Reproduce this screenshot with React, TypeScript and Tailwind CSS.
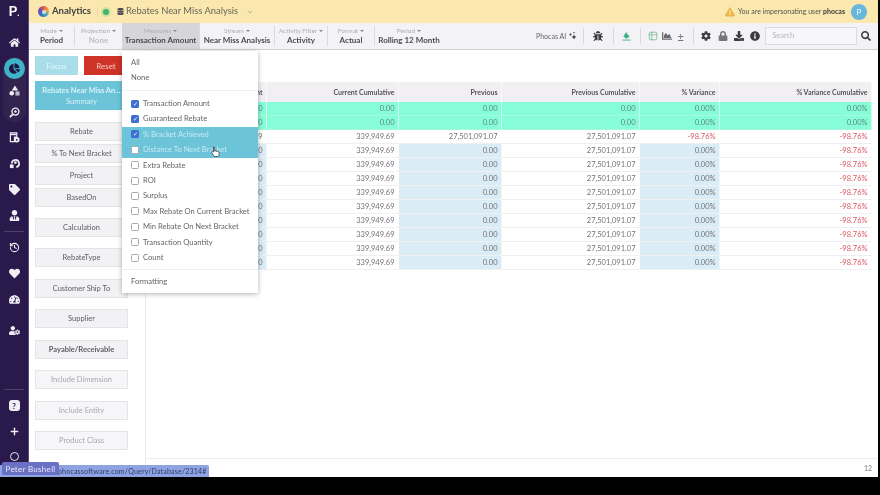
import { ChevronDown, History, Plus, Table2 } from "lucide-react";
import {
  FaBug,
  FaChartArea,
  FaChartPie,
  FaCog,
  FaDatabase,
  FaDownload,
  FaExclamationTriangle,
  FaHeart,
  FaHome,
  FaInfoCircle,
  FaLock,
  FaSearch,
  FaTachometerAlt,
  FaTag,
  FaUserCog,
  FaUserTie,
} from "react-icons/fa";

type Row = {
  first: string;
  cumulative: string;
  previous: string;
  previousCumulative: string;
  variance: string;
  varianceCumulative: string;
  kind: "green" | "white" | "blue";
};

const greenRow: Row = {
  first: "0.00",
  cumulative: "0.00",
  previous: "0.00",
  previousCumulative: "0.00",
  variance: "0.00%",
  varianceCumulative: "0.00%",
  kind: "green",
};

const blueRow: Row = {
  first: "0.00",
  cumulative: "339,949.69",
  previous: "0.00",
  previousCumulative: "27,501,091.07",
  variance: "0.00%",
  varianceCumulative: "-98.76%",
  kind: "blue",
};

const rows: Row[] = [
  greenRow,
  greenRow,
  {
    first: "339,949.69",
    cumulative: "339,949.69",
    previous: "27,501,091.07",
    previousCumulative: "27,501,091.07",
    variance: "-98.76%",
    varianceCumulative: "-98.76%",
    kind: "white",
  },
  ...Array.from({ length: 9 }, () => blueRow),
];

const measures = [
  { name: "Transaction Amount", checked: true },
  { name: "Guaranteed Rebate", checked: true },
  { name: "% Bracket Achieved", checked: true, hover: true },
  { name: "Distance To Next Bracket", checked: false, hover: true },
  { name: "Extra Rebate", checked: false },
  { name: "ROI", checked: false },
  { name: "Surplus", checked: false },
  { name: "Max Rebate On Current Bracket", checked: false },
  { name: "Min Rebate On Next Bracket", checked: false },
  { name: "Transaction Quantity", checked: false },
  { name: "Count", checked: false },
];

const columns = "grid grid-cols-[121px_132px_103px_138px_80px_152px]";

const ToolbarItem = ({
  label,
  value,
  width,
  faded,
  active,
  last,
}: {
  label: string;
  value: string;
  width: string;
  faded?: boolean;
  active?: boolean;
  last?: boolean;
}) => (
  <div
    className={`flex h-full flex-col items-center justify-center ${width} ${
      active ? "bg-[#d6d5d8]" : ""
    }`}
  >
    <div
      className={`flex h-[20px] w-full flex-col items-center justify-center ${
        last ? "" : "border-r border-[#dcdbde]"
      }`}
    >
      <div className="flex items-center gap-[2px] text-[6.5px] leading-[9px] text-[#b0afb3]">
        {label}
        <span className="h-0 w-0 border-x-[2px] border-t-[2px] border-x-transparent border-t-[#8a898d]" />
      </div>
      <div
        className={`text-[8px] leading-[11px] font-bold whitespace-nowrap ${
          faded ? "text-[#bdbcc0]" : "text-[#4a4a50]"
        }`}
      >
        {value}
      </div>
    </div>
  </div>
);

const SideButton = ({
  label,
  className,
  muted,
  strong,
}: {
  label: string;
  className?: string;
  muted?: boolean;
  strong?: boolean;
}) => (
  <div
    className={`flex h-[19px] w-[93px] items-center justify-center border border-[#e4e3e6] text-[7.5px] ${
      muted ? "bg-[#f6f5f7] text-[#a9a8ac]" : "bg-[#f2f1f3] text-[#5e5d63]"
    } ${strong ? "font-bold" : ""} ${className ?? ""}`}
  >
    {label}
  </div>
);

const Cell = ({
  value,
  blue,
  red,
}: {
  value: string;
  blue?: boolean;
  red?: boolean;
}) => (
  <div
    className={`flex items-center justify-end border-r border-white/60 pr-[3.5px] ${
      blue ? "bg-[#daecf6]" : ""
    } ${red ? "text-[#d8545f]" : ""}`}
  >
    {value}
  </div>
);

const ShapesIcon = () => (
  <svg className="h-[11px] w-[11px]" viewBox="0 0 12 12" fill="currentColor">
    <path d="M6.5 0.5 10 6H3z" />
    <circle cx="3" cy="9" r="2.5" />
    <path d="M7 7h4.5v4.5H7z" opacity="0.75" />
  </svg>
);

const DiscSearchIcon = () => (
  <svg className="h-[11px] w-[11px]" viewBox="0 0 12 12" fill="none" stroke="currentColor">
    <circle cx="7" cy="5" r="3.8" strokeWidth="1.5" />
    <circle cx="7" cy="5" r="1.4" fill="currentColor" stroke="none" />
    <path d="M4 8 1 11" strokeWidth="2" />
  </svg>
);

const DocCoinIcon = () => (
  <svg className="h-[11px] w-[11px]" viewBox="0 0 12 12" fill="none">
    <path d="M1.5 1h7v4.5H6v5H1.5z" stroke="currentColor" strokeWidth="1.3" />
    <path d="M2 2h6v1.5H2z" fill="currentColor" />
    <circle cx="8.5" cy="8.5" r="3" fill="currentColor" />
    <circle cx="8.5" cy="8.5" r="1" fill="#2a1a4b" />
  </svg>
);

const ArcSquareIcon = () => (
  <svg className="h-[11px] w-[11px]" viewBox="0 0 12 12" fill="none">
    <path d="M3 6a4 4 0 1 1 5 4" stroke="currentColor" strokeWidth="1.8" />
    <path d="M1 7h4v4H1z" fill="currentColor" />
    <circle cx="7" cy="5" r="1.5" fill="currentColor" />
  </svg>
);

const HelpIcon = () => (
  <div className="flex h-[11px] w-[11px] items-center justify-center rounded-[3px] bg-[#f1eff5] text-[8px] leading-none font-bold text-[#2a1a4b]">
    ?
  </div>
);

const BucketIcon = () => (
  <svg className="ml-[8px] h-[10px] w-[9px] text-[#3fae86]" viewBox="0 0 10 11" fill="currentColor">
    <path d="M5 0.5v2L8.5 6 5 8.5 1.5 6z" />
    <path d="M0.5 9.5h9v1h-9z" />
  </svg>
);

const SparkleIcon = () => (
  <svg className="ml-[3px] h-[8px] w-[8px] text-[#3c3c40]" viewBox="0 0 8 8" fill="currentColor">
    <path d="M5 2.5 5.8 4.2 7.5 5 5.8 5.8 5 7.5 4.2 5.8 2.5 5 4.2 4.2z" />
    <path d="M1.5 1 2 2 3 2.5 2 3 1.5 4 1 3 0 2.5 1 2z" />
    <circle cx="5" cy="0.8" r="0.7" />
  </svg>
);

const Sidebar = () => (
  <div className="flex w-[29px] shrink-0 flex-col items-center border-r border-[#5b4b7d] bg-[#2a1a4b] text-[#f1eff5]">
    <div className="mt-[3px] h-[16px] text-[14px] leading-[16px] font-bold text-white">
      P<span className="text-[9px]">.</span>
    </div>
    <FaHome className="mt-[18px] h-[11px] w-[11px]" />
    <div className="mt-[9px] flex w-[23px] flex-col items-center rounded-full bg-[#33244f] pt-[1px] pb-[4px]">
      <div className="flex h-[21px] w-[21px] items-center justify-center rounded-full bg-[#3fb4c9]">
        <FaChartPie className="h-[11px] w-[11px] text-[#1f1440]" />
      </div>
      <div className="mt-[6px]">
        <ShapesIcon />
      </div>
      <div className="mt-[11px]">
        <DiscSearchIcon />
      </div>
    </div>
    <div className="mt-[10px]">
      <DocCoinIcon />
    </div>
    <div className="mt-[15px]">
      <ArcSquareIcon />
    </div>
    <FaTag className="mt-[15px] h-[11px] w-[11px]" />
    <FaUserTie className="mt-[15px] h-[11px] w-[11px]" />
    <div className="mt-[10px] h-px w-[20px] bg-[#4c4068]" />
    <History className="mt-[10px] h-[11px] w-[11px]" strokeWidth={2.2} />
    <FaHeart className="mt-[15px] h-[11px] w-[11px]" />
    <FaTachometerAlt className="mt-[15px] h-[11px] w-[11px]" />
    <FaUserCog className="mt-[20px] h-[11px] w-[11px]" />
    <div className="mt-[53px] h-px w-[20px] bg-[#4c4068]" />
    <div className="mt-[10px]">
      <HelpIcon />
    </div>
    <Plus className="mt-[15px] h-[11px] w-[11px]" strokeWidth={3} />
    <div className="mt-[15px] h-[9px] w-[9px] rounded-full border-[1.5px] border-[#e8e6ee]" />
  </div>
);

const TopBar = () => (
  <div className="flex h-[23px] shrink-0 items-center bg-[#fbe8ae] text-[#4a4a50]">
    <div className="ml-[9px] flex h-[11px] w-[11px] items-center justify-center rounded-full bg-[conic-gradient(#e8574e,#f0a63a,#36a8c9,#3f6fc0,#6a4fb0,#e8574e)]">
      <div className="h-[4px] w-[4px] rounded-full bg-[#cfe4ee]" />
    </div>
    <span className="ml-[3px] text-[9.5px] font-bold text-[#3d3d42]">Analytics</span>
    <div className="ml-[6px] h-[10px] w-px bg-[#e6d9a8]" />
    <div className="ml-[5px] h-[6px] w-[6px] rounded-full bg-[#3fb56a] ring-2 ring-[#cfe0a0]" />
    <FaDatabase className="ml-[8px] h-[7px] w-[7px]" />
    <span className="ml-[2px] text-[9.4px] text-[#66655f]">Rebates Near Miss Analysis</span>
    <ChevronDown className="ml-[8px] h-[8px] w-[8px] text-[#7fa89a]" />
    <FaExclamationTriangle className="ml-auto h-[10px] w-[10px] text-[#e9b44c]" />
    <span className="ml-[3px] text-[7px] text-[#55544f]">
      You are impersonating user <b className="text-[#3b3b3b]">phocas</b>
    </span>
    <div className="mr-[11px] ml-[6px] flex h-[16px] w-[16px] items-center justify-center rounded-full bg-[#67b6dc] text-[8px] text-white">
      P
    </div>
  </div>
);

const Toolbar = () => (
  <div className="flex h-[27px] shrink-0 items-center border-b border-[#cfced1] bg-[#f3f2f4] text-[#3c3c40]">
    <ToolbarItem label="Mode" value="Period" width="w-[46px]" />
    <ToolbarItem label="Projection" value="None" width="w-[47px]" faded last />
    <ToolbarItem label="Measures" value="Transaction Amount" width="w-[78px]" active />
    <ToolbarItem label="Stream" value="Near Miss Analysis" width="w-[75px]" />
    <ToolbarItem label="Activity Filter" value="Activity" width="w-[53px]" />
    <ToolbarItem label="Format" value="Actual" width="w-[47px]" />
    <ToolbarItem label="Period" value="Rolling 12 Month" width="w-[68px]" last />
    <span className="ml-[93px] text-[7px] text-[#66656a]">Phocas AI</span>
    <SparkleIcon />
    <div className="ml-[6px] h-[16px] w-px bg-[#d8d7da]" />
    <FaBug className="ml-[9px] h-[10px] w-[10px]" />
    <div className="ml-[10px] h-[16px] w-px bg-[#d8d7da]" />
    <BucketIcon />
    <div className="ml-[9px] h-[16px] w-px bg-[#d8d7da]" />
    <Table2 className="ml-[7px] h-[10px] w-[10px] text-[#7dbf9c]" />
    <FaChartArea className="ml-[4px] h-[10px] w-[10px] text-[#6b6a70]" />
    <span className="ml-[4px] w-[9px] text-center text-[11px] leading-none text-[#77767b]">±</span>
    <div className="ml-[8px] h-[16px] w-px bg-[#d8d7da]" />
    <FaCog className="ml-[7px] h-[10px] w-[10px]" />
    <FaLock className="ml-[7px] h-[10px] w-[10px] text-[#77767b]" />
    <FaDownload className="ml-[6px] h-[10px] w-[10px]" />
    <FaInfoCircle className="ml-[6px] h-[10px] w-[10px]" />
    <div className="ml-[5px] flex h-[18px] w-[92px] items-center border border-[#dddcdf] bg-[#f7f6f8] pl-[6px] text-[7.5px] text-[#b5b4b8]">
      Search
    </div>
    <FaSearch className="ml-[4px] h-[10px] w-[10px]" />
  </div>
);

const LeftPanel = () => (
  <div className="flex w-[117px] shrink-0 flex-col border-r border-[#e9e8eb] pt-[6px] pb-[8px] pl-[6px]">
    <div className="flex gap-[6px]">
      <div className="flex h-[19px] w-[43px] items-center justify-center bg-[#a9dde9] text-[8px] text-[#e6f6fa]">
        Focus
      </div>
      <div className="flex h-[19px] w-[44px] items-center justify-center bg-[#cf3327] text-[8px] text-[#f4c9c4]">
        Reset
      </div>
    </div>
    <div className="mt-[6px] flex h-[29px] w-[93px] flex-col items-center justify-center bg-[#6cc4d9] text-[7.5px] leading-[11px] text-[#d9f2f7]">
      <span className="font-bold">Rebates Near Miss An...</span>
      <span>Summary</span>
    </div>
    <SideButton label="Rebate" className="mt-[12px]" />
    <SideButton label="% To Next Bracket" className="mt-[3px]" />
    <SideButton label="Project" className="mt-[3px]" />
    <SideButton label="BasedOn" className="mt-[3px]" />
    <SideButton label="Calculation" className="mt-[11px]" />
    <SideButton label="RebateType" className="mt-[11px]" />
    <SideButton label="Customer Ship To" className="mt-[12px]" />
    <SideButton label="Supplier" className="mt-[11px]" />
    <SideButton label="Payable/Receivable" className="mt-[12px]" strong />
    <SideButton label="Include Dimension" className="mt-[11px]" muted />
    <SideButton label="Include Entity" className="mt-[12px]" muted />
    <SideButton label="Product Class" className="mt-[11px]" muted />
  </div>
);

const DataTable = () => (
  <div className="flex min-w-0 flex-1 flex-col">
    <div className="flex-1 border-b border-[#ecebee] pt-[32px]">
      <div className="w-[726px] text-[7.5px] text-[#737278]">
        <div className={`${columns} h-[20px] bg-[#f1eff2] text-[7px] font-bold text-[#55545a]`}>
          <Cell value="Current" />
          <Cell value="Current Cumulative" />
          <Cell value="Previous" />
          <Cell value="Previous Cumulative" />
          <Cell value="% Variance" />
          <Cell value="% Variance Cumulative" />
        </div>
        {rows.map((row, i) => (
          <div
            key={i}
            className={`${columns} h-[14px] border-b border-[#f0eff2] ${
              row.kind === "green" ? "border-b-[#a6fadf] bg-[#86fdd6] text-[#5b8a7c]" : ""
            }`}
          >
            <Cell value={row.first} blue={row.kind === "blue"} />
            <Cell value={row.cumulative} />
            <Cell value={row.previous} blue={row.kind === "blue"} />
            <Cell value={row.previousCumulative} />
            <Cell
              value={row.variance}
              blue={row.kind === "blue"}
              red={row.kind === "white"}
            />
            <Cell value={row.varianceCumulative} red={row.kind !== "green"} />
          </div>
        ))}
      </div>
    </div>
    <div className="flex h-[18px] shrink-0 items-center justify-end pr-[6px] text-[7px] font-bold text-[#9a999d]">
      12
    </div>
  </div>
);

const MeasuresMenu = () => (
  <div className="absolute top-[51px] left-[122px] w-[136px] bg-white text-[7.6px] text-[#66656b] shadow-[0_1px_5px_rgba(0,0,0,0.3)]">
    <div className="mt-[4px] flex h-[15px] items-center pl-[9px]">All</div>
    <div className="flex h-[16px] items-center pl-[9px]">None</div>
    <div className="mt-[4px] mb-[5px] h-px bg-[#f0eff2]" />
    {measures.map((m) => (
      <div
        key={m.name}
        className={`flex h-[15.4px] items-center gap-[4px] pl-[9px] whitespace-nowrap ${
          m.hover ? "bg-[#6cc4d9] text-[#c7e9f1]" : ""
        }`}
      >
        {m.checked ? (
          <span className="flex h-[8px] w-[8px] items-center justify-center rounded-[1.5px] bg-[#3f6fd1] text-[6px] leading-none text-white">
            ✓
          </span>
        ) : (
          <span className="h-[8px] w-[8px] rounded-[1.5px] border border-[#a9a8ad] bg-white" />
        )}
        {m.name}
      </div>
    ))}
    <div className="mt-[4px] h-px bg-[#f0eff2]" />
    <div className="flex h-[23px] items-center pl-[9px]">Formatting</div>
  </div>
);

const HandCursor = () => (
  <svg className="absolute top-[146px] left-[211px]" width="9" height="11" viewBox="0 0 9 11">
    <path
      d="M2.6 0.8c.6 0 1 .4 1 1v3l3 .6c1 .2 1.6 .9 1.6 1.8v1.4c0 1-.8 1.9-1.9 1.9H4.2c-.7 0-1.3-.3-1.7-.9L.8 6.7c-.3-.5-.2-1 .2-1.3.4-.3 .9-.2 1.2 .2l.4 .5V1.8c0-.6 0-1 0-1z"
      fill="#fff"
      stroke="#3b3b40"
      strokeWidth="0.8"
    />
  </svg>
);

export default function App() {
  return (
    <div
      className="relative h-[495px] w-[880px] overflow-hidden bg-black blur-[0.4px]"
      style={{ fontFamily: "Lato, 'Open Sans', sans-serif" }}
    >
      <div className="flex h-[477px] w-[878px] bg-white">
        <Sidebar />
        <div className="flex min-w-0 flex-1 flex-col">
          <TopBar />
          <Toolbar />
          <div className="flex min-h-0 flex-1">
            <LeftPanel />
            <DataTable />
          </div>
        </div>
      </div>

      <MeasuresMenu />
      <HandCursor />

      <div className="absolute top-[465px] left-0 flex h-[12px] w-[209px] items-center rounded-tr-[2px] bg-[#8ea4e2] pl-[58px] text-[7px] tracking-[0.2px] text-[#2d3a66]">
        phocassoftware.com/Query/Database/2314#
      </div>
      <div className="absolute top-[462px] left-[2px] flex h-[13px] w-[57px] items-center justify-center rounded-[2px] bg-[#6a70c4] text-[8px] tracking-[0.3px] text-[#e8e9f8]">
        Peter Bushell
      </div>
    </div>
  );
}
